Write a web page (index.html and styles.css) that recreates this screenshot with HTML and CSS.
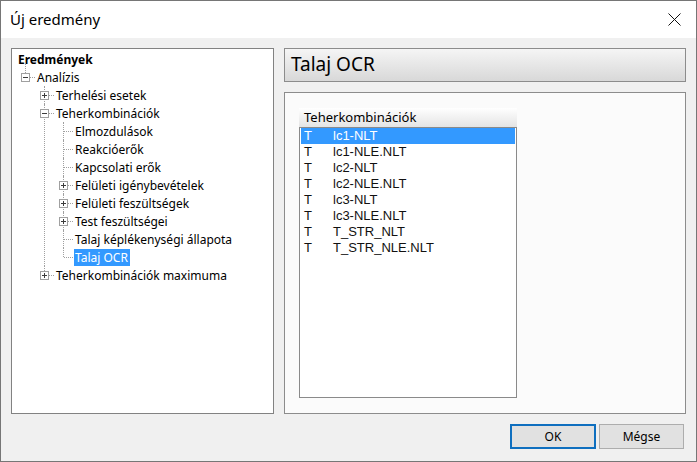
FILE: index.html
```html
<!DOCTYPE html>
<html lang="hu">
<head>
<meta charset="utf-8">
<title>Új eredmény</title>
<link rel="stylesheet" href="styles.css">
</head>
<body>
<div class="window">
  <div class="titlebar">
    <span class="title">Új eredmény</span>
    <span class="close">
      <svg width="13" height="13" viewBox="0 0 13 13"><path d="M0.5 0.5 L12.5 12.5 M12.5 0.5 L0.5 12.5" stroke="#111" stroke-width="1" fill="none"/></svg>
    </span>
  </div>
  <div class="client">
    <div class="panes">
      <div class="treebox">
        <div class="rootrow"><span class="label bold">Eredmények</span></div>
        <ul class="tree l1">
          <li class="last top">
            <div class="row"><span class="twig"><span class="exp minus"></span></span><span class="label">Analízis</span></div>
            <ul class="tree">
              <li>
                <div class="row"><span class="twig"><span class="exp plus"></span></span><span class="label">Terhelési esetek</span></div>
              </li>
              <li>
                <div class="row"><span class="twig"><span class="exp minus"></span></span><span class="label">Teherkombinációk</span></div>
                <ul class="tree">
                  <li><div class="row"><span class="twig leaf"></span><span class="label">Elmozdulások</span></div></li>
                  <li><div class="row"><span class="twig leaf"></span><span class="label">Reakcióerők</span></div></li>
                  <li><div class="row"><span class="twig leaf"></span><span class="label">Kapcsolati erők</span></div></li>
                  <li><div class="row"><span class="twig"><span class="exp plus"></span></span><span class="label">Felületi igénybevételek</span></div></li>
                  <li><div class="row"><span class="twig"><span class="exp plus"></span></span><span class="label">Felületi feszültségek</span></div></li>
                  <li><div class="row"><span class="twig"><span class="exp plus"></span></span><span class="label">Test feszültségei</span></div></li>
                  <li><div class="row"><span class="twig leaf"></span><span class="label">Talaj képlékenységi állapota</span></div></li>
                  <li class="last"><div class="row"><span class="twig leaf"></span><span class="label selected">Talaj OCR</span></div></li>
                </ul>
              </li>
              <li class="last">
                <div class="row"><span class="twig"><span class="exp plus"></span></span><span class="label">Teherkombinációk maximuma</span></div>
              </li>
            </ul>
          </li>
        </ul>
      </div>
      <div class="rightcol">
        <div class="pagehead">Talaj OCR</div>
        <div class="pagebody">
          <div class="listview">
            <div class="listhead">Teherkombinációk</div>
            <div class="listbody">
              <div class="lrow sel"><span class="c1">T</span><span class="c2">lc1-NLT</span></div>
              <div class="lrow"><span class="c1">T</span><span class="c2">lc1-NLE.NLT</span></div>
              <div class="lrow"><span class="c1">T</span><span class="c2">lc2-NLT</span></div>
              <div class="lrow"><span class="c1">T</span><span class="c2">lc2-NLE.NLT</span></div>
              <div class="lrow"><span class="c1">T</span><span class="c2">lc3-NLT</span></div>
              <div class="lrow"><span class="c1">T</span><span class="c2">lc3-NLE.NLT</span></div>
              <div class="lrow"><span class="c1">T</span><span class="c2">T_STR_NLT</span></div>
              <div class="lrow"><span class="c1">T</span><span class="c2">T_STR_NLE.NLT</span></div>
            </div>
          </div>
        </div>
      </div>
    </div>
    <div class="buttons">
      <button class="btn default">OK</button>
      <button class="btn">Mégse</button>
    </div>
  </div>
</div>
</body>
</html>
```

FILE: styles.css
```css
* { box-sizing: border-box; }
html, body { margin: 0; padding: 0; }
body {
  width: 697px;
  height: 462px;
  overflow: hidden;
  font-family: "Noto Sans", "Open Sans", sans-serif;
  font-size: 12px;
  color: #000;
  background: #f0f0f0;
}
.window {
  width: 697px;
  height: 462px;
  border: 1px solid #767676;
  background: #f0f0f0;
  display: flex;
  flex-direction: column;
}
.titlebar {
  height: 37px;
  background: #fff;
  display: flex;
  align-items: center;
  justify-content: space-between;
  padding-left: 9px;
  padding-right: 15px;
  flex: none;
}
.title {
  font-size: 15px;
  color: #000;
  margin-top: -1px;
}
.close {
  width: 13px;
  height: 13px;
  display: flex;
  margin-top: -1px;
}
.client {
  flex: 1;
  display: flex;
  flex-direction: column;
  padding: 10px 10px 0 10px;
}
.panes {
  display: flex;
  gap: 10px;
  height: 366px;
}
.treebox {
  width: 263px;
  height: 366px;
  background: #fff;
  border: 1px solid #828282;
  padding: 1px 0 0 0;
  overflow: hidden;
}
.rootrow {
  height: 18px;
  display: flex;
  align-items: center;
  padding-left: 5px;
}
.label {
  padding: 0 2px 0 1px;
  line-height: 17px;
  height: 17px;
  white-space: nowrap;
}
.bold { font-weight: bold; }
.label.selected {
  background: #3399ff;
  color: #fff;
}
ul.tree {
  list-style: none;
  margin: 0;
  padding: 0 0 0 19px;
}
ul.tree.l1 { padding-left: 9px; }
ul.tree li {
  position: relative;
}
ul.tree li::before {
  content: "";
  position: absolute;
  left: 4px;
  top: 0;
  bottom: 0;
  border-left: 1px dotted #a0a0a0;
}
ul.tree li.last::before {
  bottom: auto;
  height: 9px;
}
ul.tree li.top::before {
  top: -5px;
  height: 14px;
}
.row {
  height: 18px;
  display: flex;
  align-items: center;
}
.twig {
  position: relative;
  width: 15px;
  height: 18px;
  flex: none;
}
.twig::after {
  content: "";
  position: absolute;
  top: 9px;
  left: 5px;
  width: 9px;
  border-top: 1px dotted #a0a0a0;
}
.exp {
  position: absolute;
  left: 0;
  top: 5px;
  width: 9px;
  height: 9px;
  border: 1px solid #a0a0a0;
  background: #fff;
  z-index: 1;
}
.exp::before {
  content: "";
  position: absolute;
  left: 1px;
  top: 3px;
  width: 5px;
  height: 1px;
  background: #3c3c3c;
}
.exp.plus::after {
  content: "";
  position: absolute;
  left: 3px;
  top: 1px;
  width: 1px;
  height: 5px;
  background: #3c3c3c;
}
.rightcol {
  width: 402px;
  display: flex;
  flex-direction: column;
  gap: 10px;
}
.pagehead {
  height: 34px;
  border: 1px solid #8c8c8c;
  background: linear-gradient(#f5f5f5, #d8d8d8);
  font-size: 19px;
  line-height: 30px;
  padding-left: 6px;
  color: #000;
}
.pagebody {
  flex: 1;
  background: #fbfbfb;
  border: 1px solid #8c8c8c;
  padding: 15px 0 0 14px;
}
.listview {
  width: 218px;
  display: flex;
  flex-direction: column;
}
.listhead {
  height: 19px;
  background: linear-gradient(#ffffff, #e4e4e4);
  font-size: 13px;
  line-height: 18px;
  padding-left: 5px;
}
.listbody {
  height: 271px;
  background: #fff;
  border: 1px solid #8a8a8a;
  padding: 0 1px;
  font-family: "Liberation Sans", Arial, sans-serif;
  font-size: 13px;
  color: #111;
}
.lrow {
  height: 16px;
  line-height: 16px;
  display: flex;
  white-space: nowrap;
}
.lrow.sel {
  background: #3399ff;
  color: #fff;
}
.c1 {
  width: 32px;
  padding-left: 3px;
}
.buttons {
  display: flex;
  justify-content: flex-end;
  gap: 3px;
  padding: 10px 2px 0 0;
}
.btn {
  width: 86px;
  height: 25px;
  font-family: "Noto Sans", "Open Sans", sans-serif;
  font-size: 12px;
  color: #000;
  background: #e1e1e1;
  border: 1px solid #adadad;
  padding: 0;
  margin: 0;
}
.btn.default {
  border: 2px solid #0f6fbf;
}
.btn + .btn { width: 85px; }
```
